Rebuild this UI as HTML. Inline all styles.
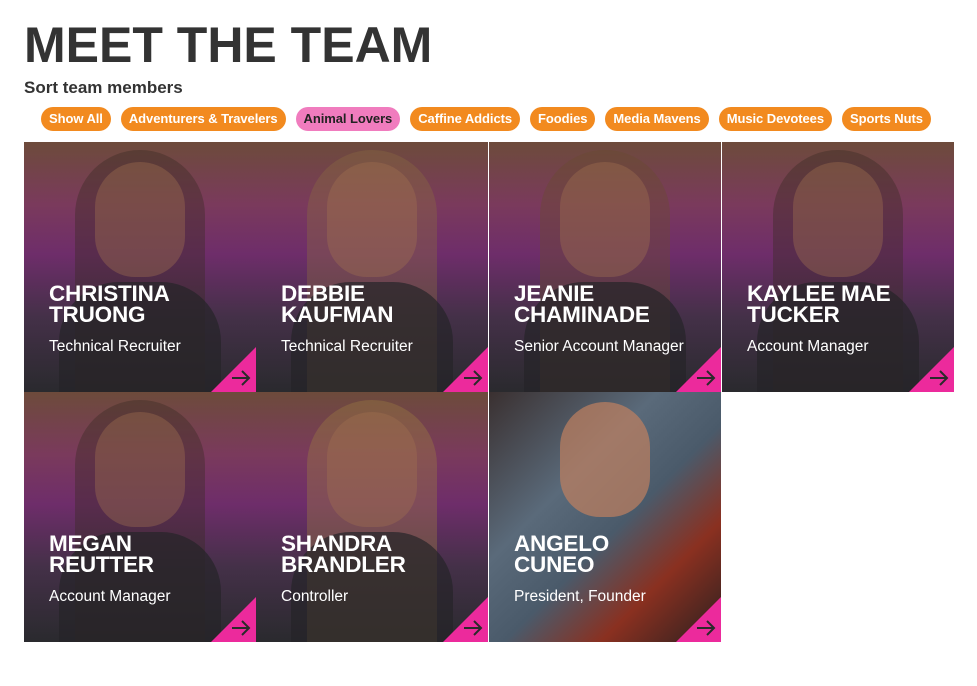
<!DOCTYPE html>
<html><head><meta charset="utf-8"><style>
body{margin:0;background:#fff;font-family:"Liberation Sans",Arial,sans-serif;width:977px;height:686px;overflow:hidden;position:relative}
h1{position:absolute;left:24px;top:16px;margin:0;font-size:50px;font-weight:bold;color:#333;letter-spacing:0}
.sort{position:absolute;left:24px;top:78px;font-size:17px;font-weight:bold;color:#333}
.btns{position:absolute;left:41px;top:107px;display:flex;gap:10px}
.b{background:#f28a1f;color:#fff;font-size:13px;font-weight:bold;height:24px;line-height:24px;border-radius:12px;padding:0 8px;white-space:nowrap;letter-spacing:-0.07px}
.b.p{background:#f07cbe;color:#222}
.c{position:absolute;width:232px;height:250px;overflow:hidden;background:linear-gradient(180deg,#6d4b3b 0%,#7a3a5c 25%,#6e2d6a 45%,#443048 70%,#2a2a2e 100%)}
.c .face{position:absolute;left:50%;top:20px;width:90px;height:115px;margin-left:-45px;border-radius:45px 45px 40px 40px;background:#a07050;opacity:.4}
.c .hair{position:absolute;left:50%;top:8px;width:130px;height:260px;margin-left:-65px;border-radius:65px 65px 10px 10px;background:#3a2a22;opacity:.4}
.c .body{position:absolute;left:15%;bottom:0;width:70%;height:110px;border-radius:60px 60px 0 0;background:#252428;opacity:.7}
.n{position:absolute;left:25px;top:141px;color:#fff;font-weight:bold;font-size:22.5px;line-height:21px;letter-spacing:-0.2px}
.r{position:absolute;left:25px;top:196px;color:#fff;font-size:15.5px}
.t{position:absolute;right:0;bottom:0;width:0;height:0;border-left:45px solid transparent;border-bottom:45px solid #ec2a9c}
.a{position:absolute;right:5px;bottom:6px;width:20px;height:16px}
</style></head><body>
<h1>MEET THE TEAM</h1>
<div class="sort">Sort team members</div>
<div class="btns"><span class="b">Show All</span><span class="b">Adventurers &amp; Travelers</span><span class="b p">Animal Lovers</span><span class="b">Caffine Addicts</span><span class="b">Foodies</span><span class="b">Media Mavens</span><span class="b">Music Devotees</span><span class="b">Sports Nuts</span></div>

<svg width="0" height="0" style="position:absolute"><defs><symbol id="ar" viewBox="0 0 20 16"><path d="M1 8H18M11 1L18 8L11 15" fill="none" stroke="#2a2a2a" stroke-width="2"/></symbol></defs></svg>

<div class="c" style="left:24px;top:142px"><div class="hair"></div><div class="face"></div><div class="body"></div><div class="n">CHRISTINA<br>TRUONG</div><div class="r">Technical Recruiter</div><div class="t"></div><svg class="a"><use href="#ar"/></svg></div>
<div class="c" style="left:256px;top:142px"><div class="hair" style="background:#8a6a40"></div><div class="face"></div><div class="body"></div><div class="n">DEBBIE<br>KAUFMAN</div><div class="r">Technical Recruiter</div><div class="t"></div><svg class="a"><use href="#ar"/></svg></div>
<div class="c" style="left:489px;top:142px"><div class="hair" style="background:#6a4a30"></div><div class="face"></div><div class="body"></div><div class="n">JEANIE<br>CHAMINADE</div><div class="r">Senior Account Manager</div><div class="t"></div><svg class="a"><use href="#ar"/></svg></div>
<div class="c" style="left:722px;top:142px"><div class="hair"></div><div class="face"></div><div class="body"></div><div class="n">KAYLEE MAE<br>TUCKER</div><div class="r">Account Manager</div><div class="t"></div><svg class="a"><use href="#ar"/></svg></div>
<div class="c" style="left:24px;top:392px"><div class="hair"></div><div class="face"></div><div class="body"></div><div class="n">MEGAN<br>REUTTER</div><div class="r">Account Manager</div><div class="t"></div><svg class="a"><use href="#ar"/></svg></div>
<div class="c" style="left:256px;top:392px"><div class="hair" style="background:#9a7a40"></div><div class="face"></div><div class="body"></div><div class="n">SHANDRA<br>BRANDLER</div><div class="r">Controller</div><div class="t"></div><svg class="a"><use href="#ar"/></svg></div>
<div class="c" style="left:489px;top:392px;background:linear-gradient(135deg,#3a3030 0%,#5a6a7a 35%,#4a5a6a 55%,#8a3020 75%,#2a2020 100%)"><div class="face" style="background:#c08060;opacity:.7;top:10px"></div><div class="n">ANGELO<br>CUNEO</div><div class="r">President, Founder</div><div class="t"></div><svg class="a"><use href="#ar"/></svg></div>
</body></html>
